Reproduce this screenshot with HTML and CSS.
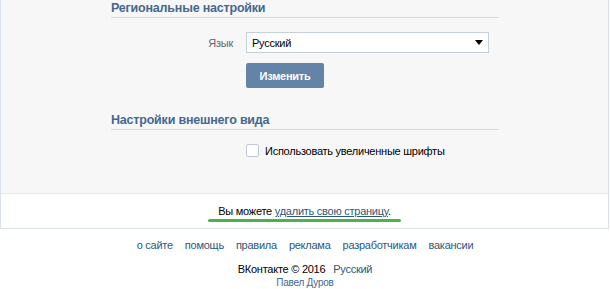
FILE: index.html
```html
<!DOCTYPE html>
<html lang="ru">
<head>
    <meta charset="UTF-8">
    <title>Настройки</title>
    <link rel="stylesheet" href="styles.css">
</head>
<body>
    <div class="settings-wrap">
        <div class="settings-panel">
            <div class="settings-section">
                <h2>Региональные настройки</h2>
                <div class="settings-row">
                    <label class="row-label" for="lang-select">Язык</label>
                    <div class="select-box">
                        <select id="lang-select">
                            <option>Русский</option>
                            <option>English</option>
                            <option>Українська</option>
                        </select>
                    </div>
                </div>
                <div class="settings-row">
                    <span class="row-label"></span>
                    <button class="btn-blue">Изменить</button>
                </div>
            </div>
            <div class="settings-section section-second">
                <h2>Настройки внешнего вида</h2>
                <div class="settings-row">
                    <span class="row-label"></span>
                    <label class="checkbox-line">
                        <span class="checkbox"></span>
                        Использовать увеличенные шрифты
                    </label>
                </div>
            </div>
        </div>
        <div class="delete-note">
            <span class="note-text">Вы можете <a href="#">удалить свою страницу</a>.</span>
        </div>
    </div>

    <footer class="page-footer">
        <nav class="footer-links">
            <a href="#">о сайте</a>
            <a href="#">помощь</a>
            <a href="#">правила</a>
            <a href="#">реклама</a>
            <a href="#">разработчикам</a>
            <a href="#">вакансии</a>
        </nav>
        <div class="footer-copy">ВКонтакте © 2016 <a href="#">Русский</a></div>
        <div class="footer-author"><a href="#">Павел Дуров</a></div>
    </footer>
</body>
</html>
```

FILE: styles.css
```css
:root {
    --vk-blue: #45688e; --link-color: #2b587a;
    --border-color: #dae1e8; --panel-bg: #f7f7f7;
    --button-bg: #6383a8; --green: #4bb34b;
}
body {
    margin: 0; background: #fff; color: #000;
    font-family: "Liberation Sans", Tahoma, sans-serif;
    font-size: 11px; letter-spacing: -0.25px;
}
a { color: var(--link-color); text-decoration: none; }

.settings-wrap {
    width: 607px;
    border: 1px solid var(--border-color); border-top: none;
}
.settings-panel {
    background: var(--panel-bg);
    border-bottom: 1px solid #e4e7eb;
    padding: 0 0 0 110px;
    height: 194px;
    box-sizing: border-box;
}
.settings-section { width: 388px; }
.settings-section h2 {
    margin: 0; padding-bottom: 1px;
    font-size: 12.5px; line-height: 16px; font-weight: bold;
    letter-spacing: -0.2px;
    color: var(--vk-blue);
    border-bottom: 1px solid #d2dbe6;
}
.section-second { margin-top: 24px; }

.settings-row { display: flex; align-items: center; margin-top: 14px; }
.settings-row + .settings-row { margin-top: 10px; }
.row-label {
    width: 122px; margin-right: 13px; text-align: right;
    color: #666;
}
.select-box { position: relative; width: 243px; }
.select-box select {
    appearance: none; -webkit-appearance: none;
    width: 100%; height: 21px; margin: 0;
    padding: 0 20px 0 5px;
    border: 1px solid #c5d0db; border-radius: 0;
    background: #fff; color: #000;
    font-family: inherit; font-size: 11px; letter-spacing: inherit;
}
.select-box::after {
    content: ""; position: absolute; right: 6px; top: 8px;
    border-left: 4px solid transparent; border-right: 4px solid transparent;
    border-top: 5px solid #000;
    pointer-events: none;
}
.btn-blue {
    width: 78px; height: 25px;
    border: none; border-radius: 2px;
    background: var(--button-bg); color: #fff;
    font-family: inherit; font-size: 11px; font-weight: bold;
    letter-spacing: inherit;
    cursor: pointer;
}
.section-second .settings-row { margin-top: 14px; }
.checkbox-line { display: flex; align-items: center; gap: 6px; color: #000; cursor: pointer; }
.checkbox {
    width: 11px; height: 11px;
    border: 1px solid #c0cad5; border-radius: 2px;
    background: #fff;
}

.delete-note {
    height: 34px; background: #fff;
    display: flex; align-items: center; justify-content: center;
}
.note-text { position: relative; padding: 0 10px; }
.note-text a { text-decoration: underline; }
.note-text::after {
    content: ""; position: absolute; left: 0; right: 0; bottom: -5px;
    height: 3px; border-radius: 2px; background: var(--green);
}

.page-footer { text-align: center; padding-top: 9px; }
.footer-links { display: flex; justify-content: center; gap: 12px; line-height: 14px; }
.footer-copy { margin-top: 10px; line-height: 14px; }
.footer-copy a { margin-left: 5px; }
.footer-author { font-size: 10px; line-height: 12px; margin-top: 1px; }
.footer-author a { color: var(--vk-blue); }
```
